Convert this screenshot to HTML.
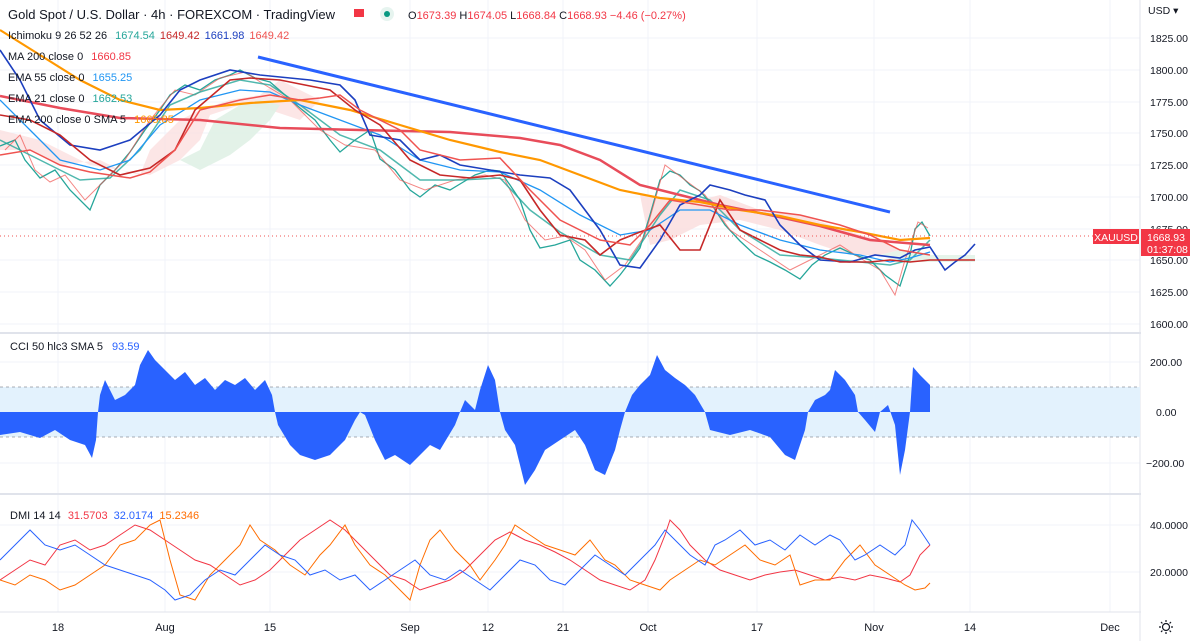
<!DOCTYPE html>
<html><head><meta charset="utf-8"><style>
html,body{margin:0;padding:0;background:#fff;width:1190px;height:641px;overflow:hidden}
svg{display:block;font-family:"Liberation Sans",sans-serif}
</style></head><body>
<svg width="1190" height="641" viewBox="0 0 1190 641" xmlns="http://www.w3.org/2000/svg">
<g stroke="#f0f3fa" stroke-width="1">
<line x1="58" y1="0" x2="58" y2="612"/><line x1="165" y1="0" x2="165" y2="612"/><line x1="270" y1="0" x2="270" y2="612"/><line x1="410" y1="0" x2="410" y2="612"/><line x1="488" y1="0" x2="488" y2="612"/><line x1="563" y1="0" x2="563" y2="612"/><line x1="648" y1="0" x2="648" y2="612"/><line x1="757" y1="0" x2="757" y2="612"/><line x1="874" y1="0" x2="874" y2="612"/><line x1="970" y1="0" x2="970" y2="612"/><line x1="1110" y1="0" x2="1110" y2="612"/>
<line x1="0" y1="38" x2="1140" y2="38"/><line x1="0" y1="70" x2="1140" y2="70"/><line x1="0" y1="102" x2="1140" y2="102"/><line x1="0" y1="133" x2="1140" y2="133"/><line x1="0" y1="165" x2="1140" y2="165"/><line x1="0" y1="197" x2="1140" y2="197"/><line x1="0" y1="229" x2="1140" y2="229"/><line x1="0" y1="260" x2="1140" y2="260"/><line x1="0" y1="292" x2="1140" y2="292"/><line x1="0" y1="324" x2="1140" y2="324"/>
<line x1="0" y1="362" x2="1140" y2="362"/><line x1="0" y1="463" x2="1140" y2="463"/>
<line x1="0" y1="525" x2="1140" y2="525"/><line x1="0" y1="572" x2="1140" y2="572"/>
</g>
<line x1="0" y1="333" x2="1190" y2="333" stroke="#e0e3eb" stroke-width="2"/>
<line x1="0" y1="494" x2="1190" y2="494" stroke="#e0e3eb" stroke-width="2"/>
<line x1="0" y1="612" x2="1190" y2="612" stroke="#e0e3eb"/>
<line x1="1140" y1="0" x2="1140" y2="641" stroke="#e0e3eb"/>

<polygon points="0,130 40,140 60,150 90,165 120,170 140,175 150,150 180,120 200,110 230,100 260,95 280,80 300,90 320,100 300,120 270,110 240,105 210,115 200,140 180,160 150,175 120,170 100,160 60,165 30,150 0,150" fill="#fbe0e0" opacity="0.8"/>
<polygon points="180,160 200,150 215,120 240,105 260,100 280,105 270,120 250,140 230,155 200,170" fill="#e0f1e6" opacity="0.9"/>
<polygon points="640,195 680,200 700,200 720,195 760,210 800,215 830,225 860,235 880,240 900,250 880,255 850,255 820,245 780,230 740,220 700,225 670,240 650,245" fill="#fbe0e0" opacity="0.9"/>
<polygon points="880,255 900,250 930,255 975,255 975,262 930,262 900,262" fill="#e6f4ea"/>

<polyline fill="none" stroke="#26a69a" stroke-width="1.3" points="0,146 15,140 25,160 40,178 55,170 70,190 90,210 100,185 115,170 130,152 145,130 160,110 170,95 185,85 200,90 215,80 230,75 240,70 255,78 270,82 285,95 300,108 315,120 330,140 340,152 355,140 370,130 380,159 395,170 410,190 420,197 435,185 450,190 460,184 475,175 490,170 500,171 510,185 520,200 530,230 540,248 555,245 570,240 580,260 595,270 610,286 620,275 630,262 640,248 650,215 660,180 670,171 680,175 690,185 700,191 712,205 725,225 740,241 755,255 770,262 785,270 800,279 812,265 825,255 840,248 855,255 870,260 885,275 900,286 910,255 915,229 922,222 930,236"/>
<polyline fill="none" stroke="#ef5350" stroke-width="1" opacity="0.7" points="5,150 20,135 35,170 50,182 65,175 85,200 105,180 125,160 150,120 175,90 195,95 220,78 245,72 265,85 290,100 320,130 345,145 375,150 400,180 425,190 455,180 485,175 505,180 525,220 545,240 565,236 585,250 605,280 625,265 645,235 665,165 685,180 705,195 730,230 760,250 790,270 810,260 840,245 860,258 880,270 895,295 905,260 918,222 928,228"/>
<polyline fill="none" stroke="#26a69a" stroke-width="1.5" opacity="0.8" points="0,140 40,160 80,180 110,178 140,150 170,105 200,92 240,80 270,85 300,105 340,135 380,150 420,180 460,180 500,178 530,210 560,232 600,255 630,260 660,215 680,190 710,200 740,230 780,255 820,258 860,262 890,265 910,260 930,240"/>
<polyline fill="none" stroke="#2196f3" stroke-width="1.3" points="0,100 30,130 60,160 100,170 130,160 160,125 200,100 240,90 270,92 300,105 340,120 380,135 420,160 460,170 500,172 540,190 580,215 620,235 650,230 680,210 710,210 740,225 780,240 820,250 860,255 890,262 910,258 930,252"/>
<polyline fill="none" stroke="#e84c5a" stroke-width="2.5" points="0,96 60,108 120,118 200,120 280,128 360,130 450,132 520,138 560,145 600,160 640,185 680,195 720,205 770,215 820,226 870,240 930,245"/>
<polyline fill="none" stroke="#ff9800" stroke-width="2.2" points="0,30 40,55 80,80 120,100 160,110 200,108 250,103 300,100 350,110 400,125 450,140 500,152 540,160 580,175 620,190 660,198 700,202 740,210 780,216 820,225 860,232 900,240 930,238"/>
<polyline fill="none" stroke="#1c3fbf" stroke-width="1.6" points="0,50 20,80 40,120 70,145 100,150 130,140 160,115 180,90 200,80 230,70 260,75 290,78 310,80 340,85 355,100 370,135 400,140 420,160 440,155 460,165 490,170 520,175 550,178 570,190 600,230 620,265 640,268 660,240 680,205 700,195 710,185 730,190 745,195 765,200 780,225 800,245 820,260 850,262 875,255 900,258 915,250 930,247 945,270 955,262 965,255 975,244"/>
<polyline fill="none" stroke="#c62828" stroke-width="1.6" points="0,115 30,120 60,135 90,160 120,175 150,168 175,150 195,110 230,80 250,78 280,80 305,85 330,90 355,110 380,125 410,160 440,175 470,178 500,175 520,180 540,210 560,235 585,240 600,255 620,240 640,232 660,225 680,250 700,250 720,200 740,230 760,240 780,250 800,255 820,257 840,262 870,262 890,260 910,262 930,260 975,260"/>
<polyline fill="none" stroke="#ef5350" stroke-width="1.5" points="0,155 30,150 60,165 90,172 130,178 150,172 175,150 200,110 240,100 270,95 300,100 320,98 340,95 360,110 400,130 420,150 460,160 500,158 530,190 560,220 600,240 630,245 650,225 670,200 700,205 730,210 760,210 800,215 840,225 870,235 900,250 930,255"/>
<line x1="258" y1="57" x2="890" y2="212" stroke="#2962ff" stroke-width="3"/>
<line x1="0" y1="236" x2="1140" y2="236" stroke="#ef5350" stroke-width="1" stroke-dasharray="1,3"/>

<rect x="0" y="387" width="1140" height="50" fill="#e3f2fd"/>
<line x1="0" y1="387" x2="1140" y2="387" stroke="#787b86" stroke-dasharray="3,3" opacity="0.6"/>
<line x1="0" y1="437" x2="1140" y2="437" stroke="#787b86" stroke-dasharray="3,3" opacity="0.6"/>
<polygon fill="#2962ff" points="0,412 0,435 20,432 40,438 55,430 70,440 85,445 92,458 96,440 98,412 100,395 105,380 115,400 125,395 135,385 140,365 148,350 155,360 165,370 175,380 185,372 195,385 205,378 215,390 225,380 235,385 245,378 255,390 265,380 272,395 275,412 278,425 290,445 300,455 315,460 330,455 345,440 355,420 360,412 365,415 375,440 385,460 395,455 410,465 420,455 430,445 440,450 455,425 460,412 465,400 475,410 480,390 488,365 495,380 500,412 505,430 515,445 525,485 535,470 545,450 560,440 575,430 585,445 595,470 605,475 615,450 620,430 625,412 632,395 640,385 650,375 657,355 665,370 675,378 685,385 695,395 705,412 710,430 730,435 750,430 770,437 785,455 795,460 805,430 808,412 815,400 825,395 830,390 835,370 845,380 855,395 858,412 865,420 875,432 880,412 888,405 895,425 900,475 905,450 910,412 913,367 920,375 930,385 930,412"/>
<text x="10" y="350" font-size="11" fill="#131722">CCI 50 hlc3 SMA 5 <tspan fill="#2962ff" dx="6">93.59</tspan></text>

<polyline fill="none" stroke="#f23645" stroke-width="1" points="0,580 15,570 30,560 45,565 60,545 75,540 90,550 105,545 120,535 135,525 150,530 165,540 180,550 195,560 210,565 225,575 240,585 255,580 270,570 285,555 300,540 315,530 330,520 345,530 360,545 375,560 390,575 405,580 420,590 435,585 450,580 465,570 480,555 495,540 510,532 525,540 540,545 555,552 570,560 585,570 600,580 615,585 630,590 645,580 655,560 665,535 670,520 680,530 690,545 705,560 720,570 735,575 750,580 765,575 780,572 795,570 810,575 825,580 840,577 855,580 870,575 885,578 900,582 910,575 920,555 930,545"/>
<polyline fill="none" stroke="#ff6d00" stroke-width="1" points="0,580 15,585 30,575 45,580 60,590 75,585 90,575 105,565 120,545 135,540 150,525 160,520 170,560 180,595 195,600 210,575 225,560 240,545 250,525 260,540 275,550 290,565 305,575 320,555 330,545 345,525 355,545 370,565 385,575 400,590 410,600 420,565 430,540 440,530 455,550 470,565 480,580 495,560 505,545 515,525 530,535 545,545 560,550 575,555 590,540 605,560 615,565 630,580 645,585 660,590 670,580 685,570 700,560 715,565 730,555 745,545 760,560 775,565 790,555 800,585 815,580 830,580 845,560 860,545 875,565 890,575 905,585 915,590 925,588 930,583"/>
<polyline fill="none" stroke="#2962ff" stroke-width="1" points="0,560 15,545 30,530 45,545 60,550 75,545 90,555 105,565 120,570 135,575 150,580 165,590 175,600 190,595 205,580 220,570 235,575 250,560 265,545 280,555 295,560 310,575 325,570 340,580 355,575 370,590 385,580 400,570 415,560 430,575 445,580 460,570 475,580 490,590 505,575 520,560 535,565 550,580 565,585 580,570 595,555 610,565 625,575 640,560 655,545 665,530 675,540 690,555 705,565 715,545 725,540 740,530 755,545 770,540 785,550 800,535 815,545 830,535 840,540 855,560 865,555 880,545 895,555 905,545 912,520 920,530 930,545"/>
<text x="10" y="519" font-size="11" fill="#131722">DMI 14 14 <tspan fill="#f23645" dx="4">31.5703</tspan><tspan fill="#2962ff" dx="6">32.0174</tspan><tspan fill="#ff6d00" dx="6">15.2346</tspan></text>

<g font-size="11">
<text x="8" y="19" font-size="13" fill="#131722">Gold Spot / U.S. Dollar · 4h · FOREXCOM · TradingView</text>
<rect x="354" y="9" width="10" height="8" fill="#f23645"/>
<circle cx="387" cy="14" r="7" fill="#e6f4ef"/><circle cx="387" cy="14" r="3" fill="#089981"/>
<text x="408" y="19" font-size="11" fill="#f23645"><tspan fill="#131722">O</tspan>1673.39 <tspan fill="#131722">H</tspan>1674.05 <tspan fill="#131722">L</tspan>1668.84 <tspan fill="#131722">C</tspan>1668.93 −4.46 (−0.27%)</text>
<text x="8" y="39" fill="#131722">Ichimoku 9 26 52 26 <tspan fill="#26a69a" dx="5">1674.54</tspan><tspan fill="#c62828" dx="5">1649.42</tspan><tspan fill="#1c3fbf" dx="5">1661.98</tspan><tspan fill="#ef5350" dx="5">1649.42</tspan></text>
<text x="8" y="60" fill="#131722">MA 200 close 0 <tspan fill="#f23645" dx="5">1660.85</tspan></text>
<text x="8" y="81" fill="#131722">EMA 55 close 0 <tspan fill="#2196f3" dx="5">1655.25</tspan></text>
<text x="8" y="102" fill="#131722">EMA 21 close 0 <tspan fill="#26a69a" dx="5">1662.53</tspan></text>
<text x="8" y="123" fill="#131722">EMA 200 close 0 SMA 5 <tspan fill="#ff9800" dx="5">1665.85</tspan></text>
</g>

<rect x="1141" y="0" width="49" height="641" fill="#fff"/>
<g font-size="10.5" fill="#131722">
<text x="1148" y="14">USD ▾</text>
<text x="1150" y="42">1825.00</text><text x="1150" y="74">1800.00</text><text x="1150" y="106">1775.00</text><text x="1150" y="137">1750.00</text><text x="1150" y="169">1725.00</text><text x="1150" y="201">1700.00</text><text x="1150" y="233">1675.00</text><text x="1150" y="264">1650.00</text><text x="1150" y="296">1625.00</text><text x="1150" y="328">1600.00</text>
<text x="1150" y="366">200.00</text><text x="1156" y="416">0.00</text><text x="1146" y="467">−200.00</text>
<text x="1150" y="529">40.0000</text><text x="1150" y="576">20.0000</text>
</g>
<rect x="1093" y="229" width="46" height="15" fill="#f23645"/>
<text x="1116" y="241" font-size="10.5" fill="#fff" text-anchor="middle">XAUUSD</text>
<rect x="1141" y="229" width="49" height="27" fill="#f23645"/>
<text x="1147" y="241" font-size="10.5" fill="#fff">1668.93</text>
<text x="1147" y="253" font-size="10.5" fill="#fff">01:37:08</text>

<g font-size="11" fill="#131722" text-anchor="middle">
<text x="58" y="631">18</text><text x="165" y="631">Aug</text><text x="270" y="631">15</text><text x="410" y="631">Sep</text><text x="488" y="631">12</text><text x="563" y="631">21</text><text x="648" y="631">Oct</text><text x="757" y="631">17</text><text x="874" y="631">Nov</text><text x="970" y="631">14</text><text x="1110" y="631">Dec</text>
</g>
<g transform="translate(1166,627)" stroke="#131722" fill="none" stroke-width="1.2"><circle r="3.5"/><path d="M0,-7V-5M0,5V7M-7,0H-5M5,0H7M-5,-5L-3.6,-3.6M3.6,3.6L5,5M-5,5L-3.6,3.6M3.6,-3.6L5,-5"/></g>
</svg>
</body></html>
